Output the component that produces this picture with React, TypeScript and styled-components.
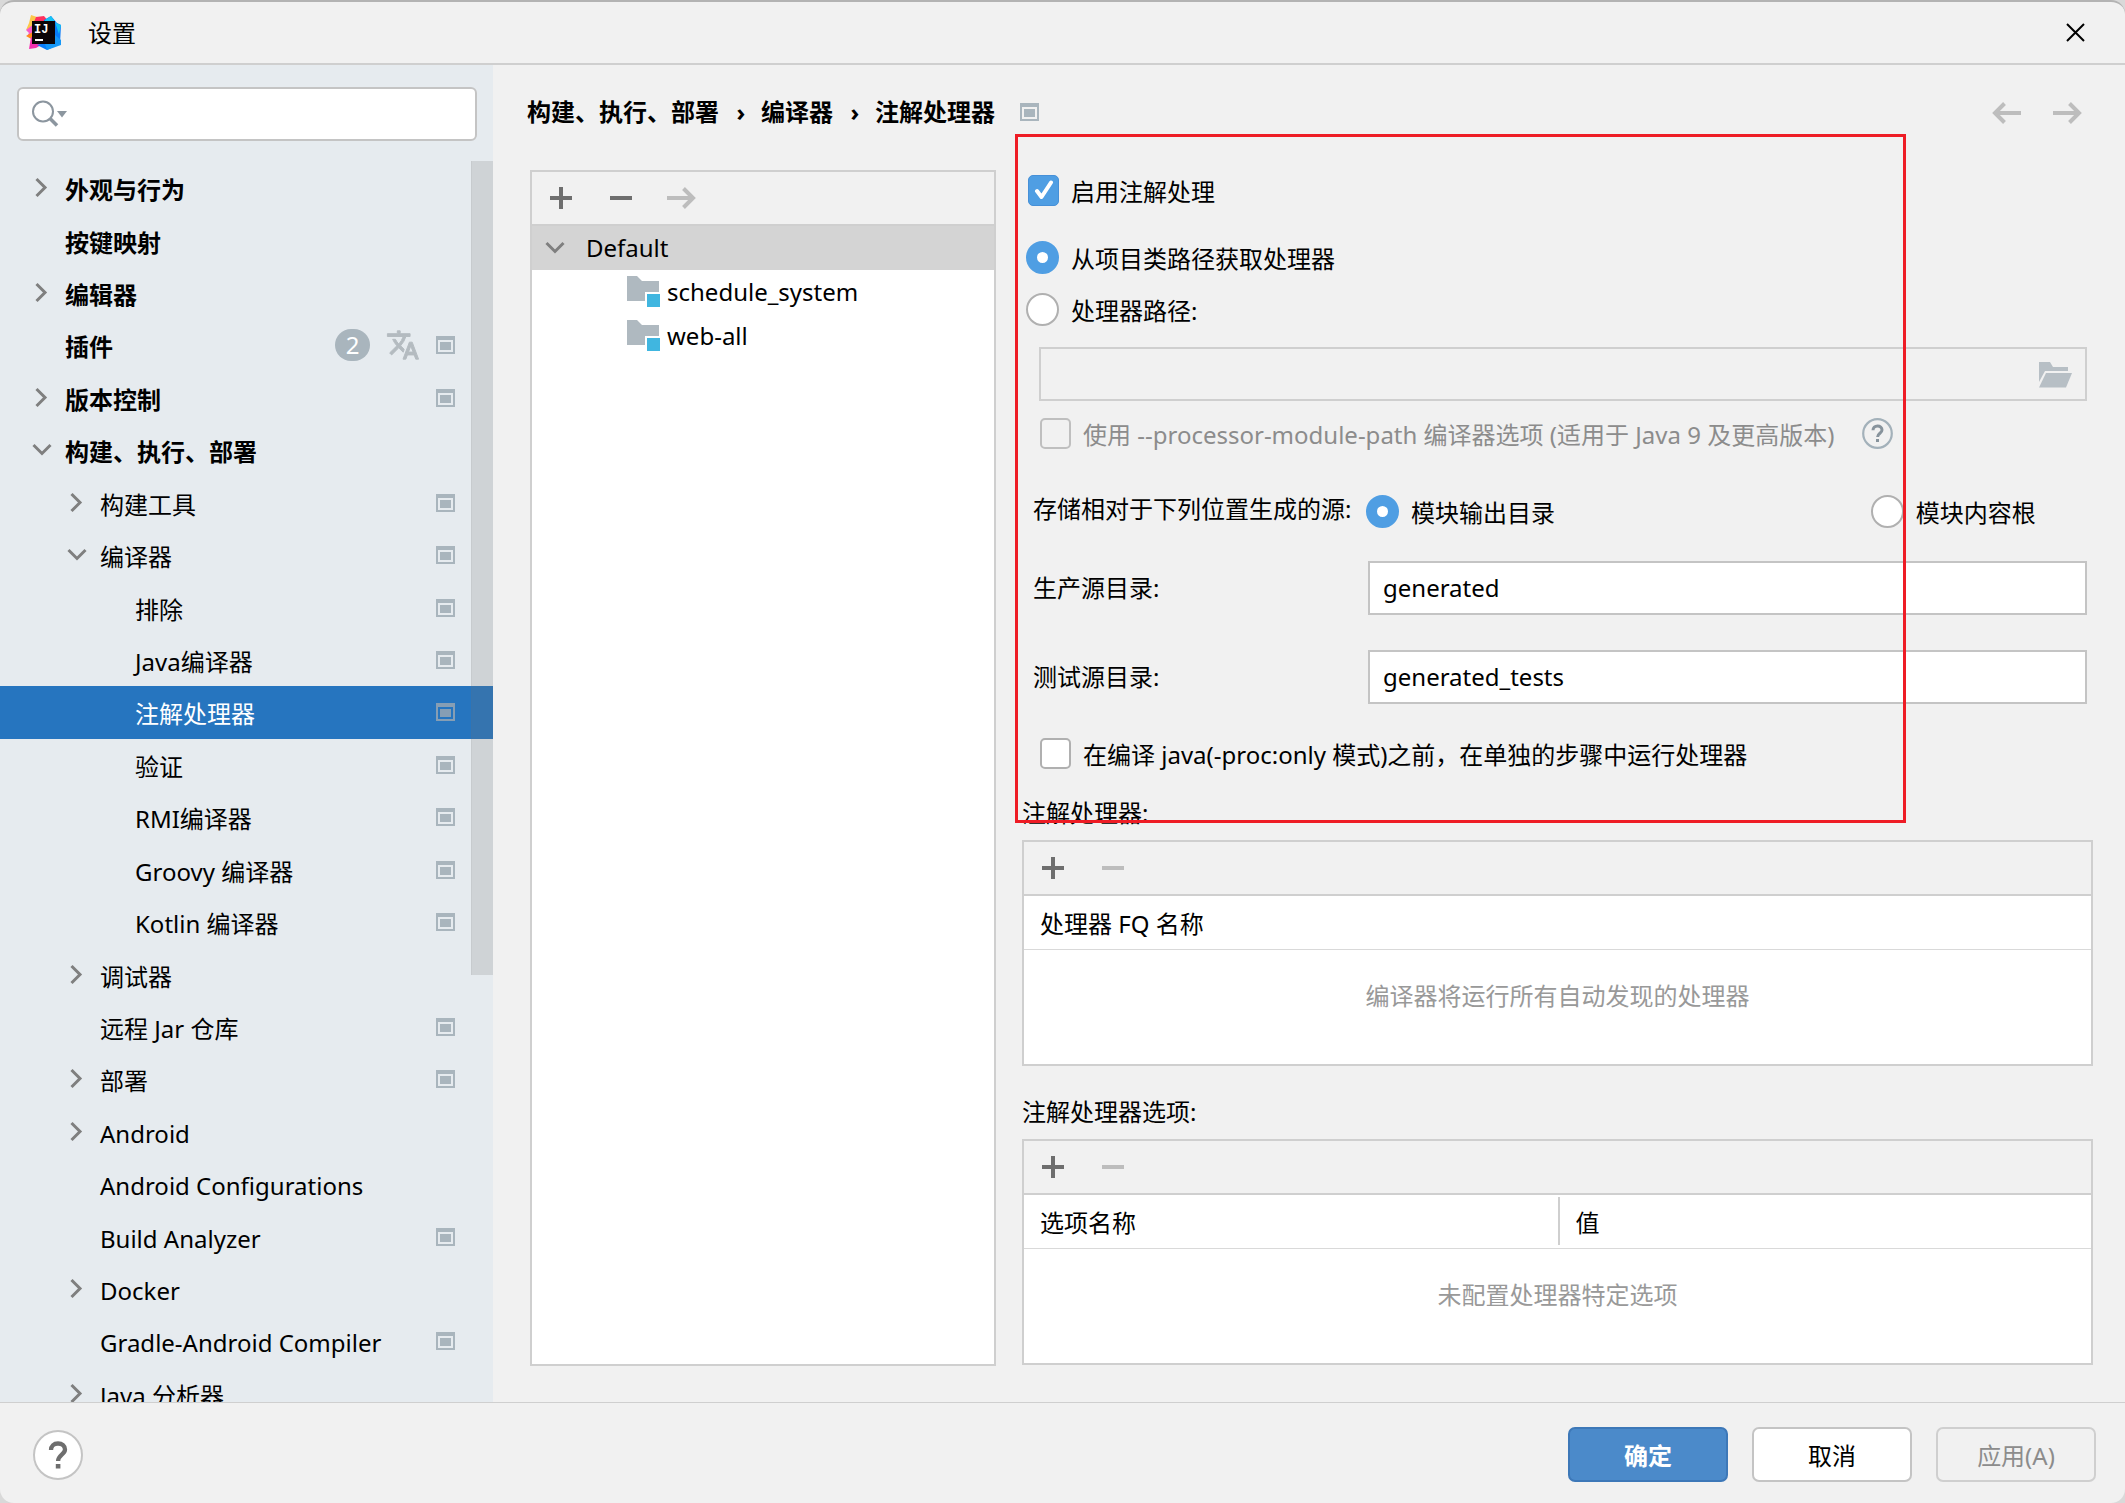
import React, { useState } from "react";
import styled, { createGlobalStyle, css } from "styled-components";

const color = {
  panel: "#f1f1f1",
  sidebar: "#e6ebef",
  line: "#cfcfcf",
  fieldLine: "#c4c4c4",
  selection: "#2675bf",
  inactiveSelection: "#d4d4d4",
  icon: "#6e6e6e",
  iconDisabled: "#bdbdbd",
  badge: "#a9b5bd",
  accent: "#4f9ee3",
  muted: "#8c8c8c",
  annotation: "#ee1c25",
};

const GlobalStyle = createGlobalStyle`
  *, *::before, *::after { box-sizing: border-box; }
  body {
    margin: 0;
    background: #d9d9d9;
    color: #000;
    font-family: "Noto Sans", "Noto Sans CJK SC", sans-serif;
    font-size: 24px;
    line-height: 32px;
  }
  button, input { font: inherit; color: inherit; }
`;

/* ---------- window frame ---------- */

const Window = styled.div`
  display: flex;
  flex-direction: column;
  height: 100vh;
  border-top: 2px solid #b3b3b3;
  border-radius: 14px;
  background: ${color.panel};
  overflow: hidden;
`;

const TitleBar = styled.header`
  display: flex;
  align-items: center;
  flex: none;
  height: 63px;
  padding: 0 40px 0 26px;
  border-bottom: 2px solid ${color.line};
`;

const Title = styled.h1`
  flex: 1;
  margin: 0 0 0 27px;
  font-size: 24px;
  font-weight: 400;
`;

const PlainButton = styled.button`
  display: flex;
  align-items: center;
  justify-content: center;
  padding: 0;
  border: 0;
  background: none;
  cursor: pointer;
  &:disabled { cursor: default; }
`;

const Body = styled.div`
  display: flex;
  flex: 1;
  min-height: 0;
`;

/* ---------- sidebar ---------- */

const Sidebar = styled.nav`
  display: flex;
  flex-direction: column;
  flex: none;
  width: 493px;
  background: ${color.sidebar};
`;

const SearchBox = styled.label`
  display: flex;
  align-items: center;
  flex: none;
  height: 54px;
  margin: 22px 16px 20px 17px;
  padding: 0 13px;
  border: 2px solid ${color.fieldLine};
  border-radius: 6px;
  background: #fff;
`;

const SearchInput = styled.input`
  flex: 1;
  min-width: 0;
  margin-left: 8px;
  border: 0;
  outline: 0;
  background: none;
`;

const TreeViewport = styled.div`
  position: relative;
  flex: 1;
  min-height: 0;
  overflow: hidden;
`;

const Tree = styled.ul`
  display: flex;
  flex-direction: column;
  height: 1258px;
  margin: 1px 0 0;
  padding: 0;
  list-style: none;
`;

const TreeItem = styled.li<{ $level: number; $selected?: boolean }>`
  display: flex;
  align-items: center;
  flex: 1 1 0;
  min-height: 0;
  padding: 0 38px 0 ${(p) => 32 + p.$level * 35}px;
  font-weight: ${(p) => (p.$level === 0 ? 700 : 400)};
  ${(p) =>
    p.$selected &&
    css`
      background: ${color.selection};
      color: #fff;
    `}
`;

const ArrowSlot = styled.span`
  display: flex;
  flex: none;
  width: 33px;
`;

const TreeText = styled.span`
  flex: 1;
  padding-top: 4px;
  white-space: nowrap;
`;

const TreeMarks = styled.span`
  display: flex;
  align-items: center;
  gap: 16px;
`;

const CountBadge = styled.span`
  width: 35px;
  height: 32px;
  border-radius: 16px;
  background: ${color.badge};
  color: #fff;
  font-weight: 400;
  text-align: center;
`;

const ScrollThumb = styled.div`
  position: absolute;
  top: 0;
  right: 0;
  width: 22px;
  height: 814px;
  background: rgba(115, 115, 115, 0.2);
  border-left: 1px solid rgba(115, 115, 115, 0.08);
`;

/* ---------- main area ---------- */

const Main = styled.main`
  display: flex;
  flex-direction: column;
  flex: 1;
  min-width: 0;
`;

const MainHeader = styled.div`
  display: flex;
  align-items: center;
  flex: none;
  height: 94px;
  padding: 0 43px 0 34px;
`;

const Crumbs = styled.ol`
  display: flex;
  flex: none;
  margin: 0;
  padding: 0;
  list-style: none;
  font-weight: 700;
`;

const Crumb = styled.li`
  display: flex;
  & + &::before {
    content: "›";
    width: 42px;
    padding-left: 2px;
    text-align: center;
  }
`;

const HeaderIcon = styled.span`
  display: flex;
  flex: 1;
  margin-left: 25px;
`;

const NavButtons = styled.div`
  display: flex;
  gap: 32px;
  padding-top: 2px;
`;

const Columns = styled.div`
  display: flex;
  flex: 1;
  gap: 26px;
  min-height: 0;
  padding: 11px 32px 36px 37px;
`;

const ProfilePanel = styled.section`
  flex: none;
  width: 466px;
  border: 2px solid ${color.line};
  background: #fff;
`;

const Toolbar = styled.div`
  display: flex;
  align-items: center;
  gap: 28px;
  height: 54px;
  padding: 0 13px;
  border-bottom: 2px solid ${color.line};
  background: ${color.panel};
`;

const ToolButton = styled(PlainButton)`
  width: 32px;
  height: 32px;
`;

const ProfileList = styled.ul`
  margin: 0;
  padding: 0;
  list-style: none;
`;

const ProfileRow = styled.li<{ $root?: boolean }>`
  display: flex;
  align-items: center;
  gap: ${(p) => (p.$root ? 21 : 6)}px;
  height: 44px;
  padding-left: ${(p) => (p.$root ? 13 : 95)}px;
  background: ${(p) => (p.$root ? color.inactiveSelection : "none")};
`;

/* ---------- settings form ---------- */

const Form = styled.form`
  position: relative;
  flex: 1;
  min-width: 0;
`;

const Annotation = styled.div`
  position: absolute;
  top: -36px;
  left: -7px;
  width: 891px;
  height: 689px;
  border: 3px solid ${color.annotation};
  pointer-events: none;
`;

const RadioGroup = styled.div`
  display: flex;
  flex-direction: column;
  gap: 12px;
  margin: 21px 0 12px;
  padding: 6px 0;
  padding-left: 4px;
`;

const CheckRow = styled.div<{ $indent?: number }>`
  display: flex;
  align-items: center;
  gap: 28px;
  height: 40px;
  padding-left: ${(p) => p.$indent ?? 6}px;
`;

const Choice = styled.label<{ $muted?: boolean }>`
  display: flex;
  align-items: center;
  gap: 12px;
  height: 40px;
  white-space: nowrap;
  color: ${(p) => (p.$muted ? color.muted : "inherit")};
`;

const ChoiceText = styled.span`
  padding-top: 4px;
`;

const CheckShell = styled.span`
  display: grid;
  place-items: center;
  & > * { grid-area: 1 / 1; }
`;

const CheckInput = styled.input`
  appearance: none;
  width: 31px;
  height: 31px;
  margin: 0;
  border: 2px solid #b0b0b0;
  border-radius: 5px;
  background: #fff;
  &:checked {
    border: 1px solid #4690d8;
    background: ${color.accent};
  }
  &:disabled {
    border-color: #bfbfbf;
    background: none;
  }
`;

const RadioInput = styled.input`
  appearance: none;
  width: 33px;
  height: 33px;
  margin: 0;
  border: 2px solid #b0b0b0;
  border-radius: 50%;
  background: #fff;
  &:checked { border: 11px solid ${color.accent}; }
`;

const PathField = styled.div`
  display: flex;
  align-items: center;
  height: 54px;
  margin: 0 6px 12px 17px;
  padding: 2px 13px 0 0;
  border: 2px solid ${color.line};
`;

const PathInput = styled.input`
  flex: 1;
  min-width: 0;
  border: 0;
  background: none;
`;

const Fields = styled.div`
  display: grid;
  grid-template-columns: 335px 1fr;
  align-items: center;
  row-gap: 35px;
  margin: 38px 6px 29px 11px;
`;

const FieldLabel = styled.label`
  white-space: nowrap;
`;

const LocationRow = styled.div`
  display: grid;
  grid-template-columns: 7fr 3fr;
  height: 40px;
  margin: 0 0 -5px -2px;
`;

const TextInput = styled.input`
  width: 100%;
  height: 54px;
  padding: 0 13px 2px;
  border: 2px solid ${color.fieldLine};
  border-radius: 0;
  background: #fff;
`;

const SectionLabel = styled.h2<{ $space: number }>`
  margin: ${(p) => p.$space}px 0 11px;
  font-size: 24px;
  font-weight: 400;
`;

const TablePanel = styled.div`
  border: 2px solid ${color.line};
  background: #fff;
`;

const Table = styled.table`
  width: 100%;
  border-collapse: collapse;
  table-layout: fixed;
`;

const HeadCell = styled.th`
  height: 53px;
  padding: 2px 0;
  border-bottom: 1px solid #d9d9d9;
  font-weight: 400;
  text-align: left;
`;

const HeadText = styled.span<{ $divided?: boolean }>`
  display: block;
  padding: 10px 16px 6px;
  border-left: ${(p) => (p.$divided ? `2px solid ${color.line}` : "0")};
`;

const EmptyCell = styled.td`
  height: 115px;
  padding: 0 0 22px;
  color: #999;
  text-align: center;
`;

/* ---------- footer ---------- */

const Footer = styled.footer`
  display: flex;
  align-items: center;
  gap: 24px;
  flex: none;
  height: 101px;
  padding: 3px 29px 0 33px;
  border-top: 1px solid ${color.line};
`;

const HelpButton = styled(PlainButton)`
  width: 50px;
  height: 50px;
  margin-right: auto;
  border: 2px solid ${color.fieldLine};
  border-radius: 50%;
  background: #fff;
`;

const ActionButton = styled.button<{ $primary?: boolean }>`
  width: 160px;
  height: 55px;
  padding: 2px 0 0;
  border: 2px solid ${color.fieldLine};
  border-radius: 7px;
  background: #fff;
  &:disabled {
    border-color: ${color.line};
    background: none;
    color: ${color.muted};
  }
  ${(p) =>
    p.$primary &&
    css`
      border-color: #3d78b8;
      background: #4b8aca;
      color: #fff;
      font-weight: 700;
    `}
`;

/* ---------- icons ---------- */

const Chevron = ({ open }: { open?: boolean }) => (
  <svg width="20" height="22" viewBox="0 0 20 22" fill="none" stroke="#7f7f7f" strokeWidth="3">
    <path d={open ? "M1.5 6 10 14.5 18.5 6" : "M4.5 2 13 10.5 4.5 19"} />
  </svg>
);

const ProjectMark = ({ selected }: { selected?: boolean }) => (
  <svg width="19" height="18" viewBox="0 0 19 18" fill={selected ? "#869eb4" : color.badge}>
    <path fillRule="evenodd" d="M0 0h19v18H0zM2 4v12h15V4z" />
    <path d="M4 6h11v8H4z" />
  </svg>
);

const PlusIcon = () => (
  <svg width="24" height="24" viewBox="0 0 24 24" fill={color.icon}>
    <path d="M10 1h4v9h9v4h-9v9h-4v-9H1v-4h9z" />
  </svg>
);

const MinusIcon = ({ disabled }: { disabled?: boolean }) => (
  <svg width="24" height="24" viewBox="0 0 24 24" fill={disabled ? color.iconDisabled : color.icon}>
    <path d="M1 10h22v4H1z" />
  </svg>
);

const ArrowIcon = ({ left }: { left?: boolean }) => (
  <svg width="29" height="24" viewBox="0 0 29 24" fill="none" stroke={color.iconDisabled} strokeWidth="4">
    <path d={left ? "M29 12H3M12.5 2.5 3 12l9.500 9.500" : "M0 12h26M16.500 2.500 26 12l-9.500 9.500"} />
  </svg>
);

const SearchIcon = () => (
  <svg width="36" height="28" viewBox="0 0 36 28" fill="none" stroke="#8c969f">
    <circle cx="11" cy="11.500" r="10" strokeWidth="2" />
    <path d="m18 18.500 7 7" strokeWidth="3.500" />
    <path d="M25 11h10l-5 6.500z" fill="#8c969f" stroke="none" />
  </svg>
);

const TranslateIcon = () => (
  <svg width="34" height="34" viewBox="0 0 24 24" fill="#b4bbc0" stroke="#b4bbc0" strokeWidth="0.7">
    <path d="m12.870 15.070-2.540-2.510.03-.03A17.520 17.520 0 0 0 14.070 6H17V4h-7V2H8v2H1v2h11.170A15.800 15.800 0 0 1 9 11.350 15.600 15.600 0 0 1 6.690 8h-2a17.600 17.600 0 0 0 2.980 4.560l-5.090 5.020L4 19l5-5 3.110 3.110zM18.500 10h-2L12 22h2l1.120-3h4.750L21 22h2zm-2.620 7 1.620-4.330L19.120 17z" />
  </svg>
);

const ModuleIcon = () => (
  <svg width="34" height="32" viewBox="0 0 34 32">
    <path d="M0 0h10l5 5h17v11H18v9H0z" fill="#afb9c0" />
    <path d="M20 18h13v13H20z" fill="#40b6e0" />
  </svg>
);

const OpenFolderIcon = () => (
  <svg width="33" height="26" viewBox="0 0 33 26" fill="#b7bfc5">
    <path d="M0 0h11l3 5h15v4H6L0 20z" />
    <path d="M7 11h26l-6 14.500H0z" />
  </svg>
);

const ContextHelpIcon = () => (
  <svg width="31" height="31" viewBox="0 0 31 31" fill="none" stroke="#a3b1ba">
    <circle cx="15.500" cy="15.500" r="14.300" strokeWidth="2.200" />
    <path d="M11 12.300c0-2.600 1.900-4.300 4.500-4.300s4.500 1.600 4.500 4c0 3.200-4.400 3.300-4.400 7" stroke="#87939c" strokeWidth="3" />
    <path d="M14 21h3v3h-3z" fill="#87939c" stroke="none" />
  </svg>
);

const QuestionIcon = () => (
  <svg width="20" height="28" viewBox="0 0 20 28" fill="none">
    <path d="M3 9c0-4 2.800-6.500 7-6.500S17 5 17 8.500c0 5-6.900 5.500-6.900 11.500" stroke={color.icon} strokeWidth="4.300" />
    <path d="M7.800 23h4.600v4.500H7.800z" fill={color.icon} />
  </svg>
);

const CloseIcon = () => (
  <svg width="19" height="19" viewBox="0 0 19 19" fill="none" stroke="#000" strokeWidth="2">
    <path d="m1 1 17 17M18 1 1 18" />
  </svg>
);

const CheckIcon = () => (
  <svg width="20" height="20" viewBox="0 0 20 20" fill="none" stroke="#fff" strokeWidth="4" strokeLinecap="round" strokeLinejoin="round" pointerEvents="none">
    <path d="m3 11 4.500 6L17 2.500" />
  </svg>
);

const ProductLogo = () => (
  <svg width="35" height="35" viewBox="0 0 35 35">
    <path d="M5 0 11 2 7 12 0 15l3-7z" fill="#fcc84a" />
    <path d="m0 15 8-6v10l-7 2 2-3z" fill="#f75ac8" />
    <path d="m0 21 7-4v8z" fill="#ff8a18" />
    <path d="m5 22 15 5-10 6-7 1z" fill="#f52fb0" />
    <path d="m10 2 8-1 5 6H8z" fill="#fe315d" />
    <path d="m18 5 7-4 6 7 4 2-1 19-13 6-10-5 8-2z" fill="#087cfa" />
    <path d="m19 5 6-4 5 7 5 2-2 9-4-12H19z" fill="#16c4f4" />
    <path d="m29 20 6 5v5l-14 5-2-6z" fill="#1597f7" />
    <path d="M6 6h23v23H6z" fill="#0b0508" />
    <text x="8" y="18" fill="#fff" fontFamily="Liberation Mono, monospace" fontWeight="700" fontSize="12">IJ</text>
    <path d="M9 24h8v2H9z" fill="#fff" />
  </svg>
);

/* ---------- data ---------- */

type Node = {
  text: string;
  level: number;
  arrow?: "open" | "closed";
  mark?: boolean;
  selected?: boolean;
  count?: number;
};

const nodes: Node[] = [
  { text: "外观与行为", level: 0, arrow: "closed" },
  { text: "按键映射", level: 0 },
  { text: "编辑器", level: 0, arrow: "closed" },
  { text: "插件", level: 0, mark: true, count: 2 },
  { text: "版本控制", level: 0, arrow: "closed", mark: true },
  { text: "构建、执行、部署", level: 0, arrow: "open" },
  { text: "构建工具", level: 1, arrow: "closed", mark: true },
  { text: "编译器", level: 1, arrow: "open", mark: true },
  { text: "排除", level: 2, mark: true },
  { text: "Java编译器", level: 2, mark: true },
  { text: "注解处理器", level: 2, mark: true, selected: true },
  { text: "验证", level: 2, mark: true },
  { text: "RMI编译器", level: 2, mark: true },
  { text: "Groovy 编译器", level: 2, mark: true },
  { text: "Kotlin 编译器", level: 2, mark: true },
  { text: "调试器", level: 1, arrow: "closed" },
  { text: "远程 Jar 仓库", level: 1, mark: true },
  { text: "部署", level: 1, arrow: "closed", mark: true },
  { text: "Android", level: 1, arrow: "closed" },
  { text: "Android Configurations", level: 1 },
  { text: "Build Analyzer", level: 1, mark: true },
  { text: "Docker", level: 1, arrow: "closed" },
  { text: "Gradle-Android Compiler", level: 1, mark: true },
  { text: "Java 分析器", level: 1, arrow: "closed" },
];

/* ---------- parts ---------- */

type CheckProps = {
  text: string;
  checked: boolean;
  disabled?: boolean;
  onChange?: (value: boolean) => void;
};

const CheckChoice = ({ text, checked, disabled, onChange }: CheckProps) => (
  <Choice $muted={disabled}>
    <CheckShell>
      <CheckInput
        type="checkbox"
        checked={checked}
        disabled={disabled}
        onChange={(e) => onChange?.(e.target.checked)}
      />
      {checked && <CheckIcon />}
    </CheckShell>
    <ChoiceText>{text}</ChoiceText>
  </Choice>
);

type RadioProps = { name: string; text: string; initial?: boolean };

const RadioChoice = ({ name, text, initial }: RadioProps) => (
  <Choice>
    <RadioInput type="radio" name={name} defaultChecked={initial} />
    <ChoiceText>{text}</ChoiceText>
  </Choice>
);

const DataTable = ({ columns, empty }: { columns: string[]; empty: string }) => (
  <TablePanel>
    <Toolbar>
      <ToolButton type="button" aria-label="添加"><PlusIcon /></ToolButton>
      <ToolButton type="button" aria-label="移除" disabled><MinusIcon disabled /></ToolButton>
    </Toolbar>
    <Table>
      <thead>
        <tr>
          {columns.map((name, i) => (
            <HeadCell key={name} scope="col">
              <HeadText $divided={i > 0}>{name}</HeadText>
            </HeadCell>
          ))}
        </tr>
      </thead>
      <tbody>
        <tr>
          <EmptyCell colSpan={columns.length}>{empty}</EmptyCell>
        </tr>
      </tbody>
    </Table>
  </TablePanel>
);

export default function App() {
  const [enabled, setEnabled] = useState(true);
  const [separateStep, setSeparateStep] = useState(false);

  return (
    <>
      <GlobalStyle />
      <Window>
        <TitleBar>
          <ProductLogo />
          <Title>设置</Title>
          <PlainButton type="button" aria-label="关闭"><CloseIcon /></PlainButton>
        </TitleBar>

        <Body>
          <Sidebar>
            <SearchBox>
              <SearchIcon />
              <SearchInput type="text" aria-label="搜索" />
            </SearchBox>
            <TreeViewport>
              <Tree>
                {nodes.map((node) => (
                  <TreeItem key={node.level + node.text} $level={node.level} $selected={node.selected}>
                    <ArrowSlot>{node.arrow && <Chevron open={node.arrow === "open"} />}</ArrowSlot>
                    <TreeText>{node.text}</TreeText>
                    <TreeMarks>
                      {node.count && <CountBadge>{node.count}</CountBadge>}
                      {node.count && <TranslateIcon />}
                      {node.mark && <ProjectMark selected={node.selected} />}
                    </TreeMarks>
                  </TreeItem>
                ))}
              </Tree>
              <ScrollThumb />
            </TreeViewport>
          </Sidebar>

          <Main>
            <MainHeader>
              <Crumbs>
                <Crumb>构建、执行、部署</Crumb>
                <Crumb>编译器</Crumb>
                <Crumb>注解处理器</Crumb>
              </Crumbs>
              <HeaderIcon><ProjectMark /></HeaderIcon>
              <NavButtons>
                <PlainButton type="button" aria-label="后退" disabled><ArrowIcon left /></PlainButton>
                <PlainButton type="button" aria-label="前进" disabled><ArrowIcon /></PlainButton>
              </NavButtons>
            </MainHeader>

            <Columns>
              <ProfilePanel>
                <Toolbar>
                  <ToolButton type="button" aria-label="添加"><PlusIcon /></ToolButton>
                  <ToolButton type="button" aria-label="移除"><MinusIcon /></ToolButton>
                  <ToolButton type="button" aria-label="移动" disabled><ArrowIcon /></ToolButton>
                </Toolbar>
                <ProfileList>
                  <ProfileRow $root><Chevron open />Default</ProfileRow>
                  <ProfileRow><ModuleIcon />schedule_system</ProfileRow>
                  <ProfileRow><ModuleIcon />web-all</ProfileRow>
                </ProfileList>
              </ProfilePanel>

              <Form>
                <CheckRow>
                  <CheckChoice text="启用注解处理" checked={enabled} onChange={setEnabled} />
                </CheckRow>
                <RadioGroup>
                  <RadioChoice name="source" text="从项目类路径获取处理器" initial />
                  <RadioChoice name="source" text="处理器路径:" />
                </RadioGroup>
                <PathField>
                  <PathInput type="text" aria-label="处理器路径" disabled />
                  <PlainButton type="button" aria-label="浏览" disabled><OpenFolderIcon /></PlainButton>
                </PathField>
                <CheckRow $indent={18}>
                  <CheckChoice
                    text="使用 --processor-module-path 编译器选项 (适用于 Java 9 及更高版本)"
                    checked={false}
                    disabled
                  />
                  <ContextHelpIcon />
                </CheckRow>

                <Fields>
                  <span>存储相对于下列位置生成的源:</span>
                  <LocationRow>
                    <RadioChoice name="location" text="模块输出目录" initial />
                    <RadioChoice name="location" text="模块内容根" />
                  </LocationRow>
                  <FieldLabel htmlFor="main-dir">生产源目录:</FieldLabel>
                  <TextInput id="main-dir" type="text" defaultValue="generated" />
                  <FieldLabel htmlFor="test-dir">测试源目录:</FieldLabel>
                  <TextInput id="test-dir" type="text" defaultValue="generated_tests" />
                </Fields>

                <CheckRow $indent={18}>
                  <CheckChoice
                    text="在编译 java(-proc:only 模式)之前，在单独的步骤中运行处理器"
                    checked={separateStep}
                    onChange={setSeparateStep}
                  />
                </CheckRow>

                <SectionLabel $space={24}>注解处理器:</SectionLabel>
                <DataTable columns={["处理器 FQ 名称"]} empty="编译器将运行所有自动发现的处理器" />
                <SectionLabel $space={30}>注解处理器选项:</SectionLabel>
                <DataTable columns={["选项名称", "值"]} empty="未配置处理器特定选项" />
                <Annotation />
              </Form>
            </Columns>
          </Main>
        </Body>

        <Footer>
          <HelpButton type="button" aria-label="帮助"><QuestionIcon /></HelpButton>
          <ActionButton type="button" $primary>确定</ActionButton>
          <ActionButton type="button">取消</ActionButton>
          <ActionButton type="button" disabled>应用(A)</ActionButton>
        </Footer>
      </Window>
    </>
  );
}
